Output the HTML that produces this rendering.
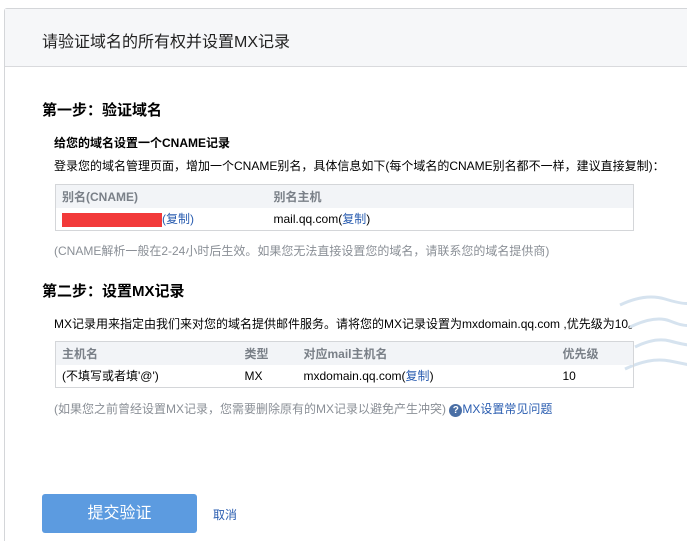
<!DOCTYPE html>
<html style="width:687px;height:541px;overflow:hidden"><head><meta charset="utf-8"><style>
*{margin:0;padding:0;box-sizing:border-box}
body{width:687px;height:541px;background:#fff;font-family:"Liberation Sans","Noto Sans CJK SC",sans-serif;position:relative;overflow:hidden;color:#000}
.box{position:absolute;left:4px;top:8px;width:700px;height:560px;border:1px solid #d4d6d9;border-radius:3px}
.hd{position:absolute;left:5px;top:9px;width:690px;height:58px;background:#f6f7f9;border-bottom:1px solid #d9dadd}
.a{position:absolute;white-space:nowrap}
.t{left:42px;top:28px;font-size:16px;color:#222}
.h{font-size:15px;font-weight:bold;left:42px}
.s{font-size:12px}
.g{color:#8a8f96}
.l{color:#2a5db0}
table{position:absolute;border-collapse:collapse;border:1px solid #d4d6d9;font-size:12px}
td{padding:0 0 0 6px;height:23px}
tr.th td{background:#f2f4f7;color:#7a8088;font-weight:bold}
.btn{position:absolute;left:42px;top:494px;width:155px;height:39px;background:#5c9be0;border-radius:3px;color:#fff;font-size:16px;text-align:center;line-height:39px}
</style></head><body>
<div class="box"></div>
<div class="hd"></div>
<div class="a t">请验证域名的所有权并设置MX记录</div>
<div class="a h" style="top:99px">第一步：验证域名</div>
<div class="a s" style="left:54px;top:134px;font-weight:bold">给您的域名设置一个CNAME记录</div>
<div class="a s" style="left:54px;top:157px">登录您的域名管理页面，增加一个CNAME别名，具体信息如下(每个域名的CNAME别名都不一样，建议直接复制)：</div>
<table style="left:55px;top:184px;width:579px">
<tr class="th"><td style="width:212px">别名(CNAME)</td><td>别名主机</td></tr>
<tr><td><span style="display:inline-block;width:100px;height:14px;background:#f23a3a;vertical-align:middle"></span><span class="l">(复制)</span></td><td>mail.qq.com(<span class="l">复制</span>)</td></tr>
</table>
<div class="a s g" style="left:54px;top:242px">(CNAME解析一般在2-24小时后生效。如果您无法直接设置您的域名，请联系您的域名提供商)</div>
<div class="a h" style="top:280px">第二步：设置MX记录</div>
<div class="a s" style="left:54px;top:315px">MX记录用来指定由我们来对您的域名提供邮件服务。请将您的MX记录设置为mxdomain.qq.com ,优先级为10。</div>
<svg style="position:absolute;left:600px;top:285px" width="90" height="110"><g stroke="#d6e3ef" stroke-width="3" fill="none"><path d="M20 20 Q45 8 65 14 T90 18"/><path d="M30 42 Q55 30 70 36 T90 40"/><path d="M35 62 Q55 52 70 56 T90 60"/><path d="M25 84 Q50 72 70 76 T90 80"/></g></svg>
<table style="left:55px;top:341px;width:579px">
<tr class="th"><td style="width:183px">主机名</td><td style="width:59px">类型</td><td style="width:259px">对应mail主机名</td><td>优先级</td></tr>
<tr><td>(不填写或者填'@')</td><td>MX</td><td>mxdomain.qq.com(<span class="l">复制</span>)</td><td>10</td></tr>
</table>
<div class="a s g" style="left:54px;top:400px">(如果您之前曾经设置MX记录，您需要删除原有的MX记录以避免产生冲突) <span style="display:inline-block;width:13px;height:13px;border-radius:50%;background:#4a6fa5;color:#fff;font-size:10px;text-align:center;line-height:13px;font-weight:bold">?</span><span class="l">MX设置常见问题</span></div>
<div class="btn">提交验证</div>
<div class="a s l" style="left:213px;top:506px;color:#2a5db0">取消</div>
</body></html>
